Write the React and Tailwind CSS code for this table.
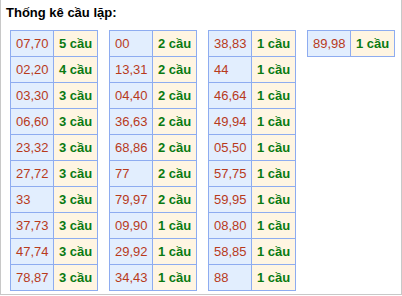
const columns = [
  [
    ["07,70", "5 cầu"],
    ["02,20", "4 cầu"],
    ["03,30", "3 cầu"],
    ["06,60", "3 cầu"],
    ["23,32", "3 cầu"],
    ["27,72", "3 cầu"],
    ["33", "3 cầu"],
    ["37,73", "3 cầu"],
    ["47,74", "3 cầu"],
    ["78,87", "3 cầu"],
  ],
  [
    ["00", "2 cầu"],
    ["13,31", "2 cầu"],
    ["04,40", "2 cầu"],
    ["36,63", "2 cầu"],
    ["68,86", "2 cầu"],
    ["77", "2 cầu"],
    ["79,97", "2 cầu"],
    ["09,90", "1 cầu"],
    ["29,92", "1 cầu"],
    ["34,43", "1 cầu"],
  ],
  [
    ["38,83", "1 cầu"],
    ["44", "1 cầu"],
    ["46,64", "1 cầu"],
    ["49,94", "1 cầu"],
    ["05,50", "1 cầu"],
    ["57,75", "1 cầu"],
    ["59,95", "1 cầu"],
    ["08,80", "1 cầu"],
    ["58,85", "1 cầu"],
    ["88", "1 cầu"],
  ],
  [["89,98", "1 cầu"]],
];

export default function App() {
  return (
    <div
      className="w-[402px] h-[295px] bg-white border-x border-b border-[#c8c8c8]"
      style={{ fontFamily: '"Liberation Sans", Arial, sans-serif' }}
    >
      {/* Title */}
      <h3 className="pl-[5px] pt-[5px] h-[30px] text-[13px] font-bold leading-[15px] text-black">
        Thống kê cầu lặp:
      </h3>

      {/* Tables */}
      <div className="flex items-start gap-[11px] pl-[9px]">
        {columns.map((rows, i) => (
          <table key={i} className="border-collapse w-[88px] table-fixed">
            <tbody>
              {rows.map(([pair, count]) => (
                <tr key={pair} className="h-[26px]">
                  <td className="w-[43px] border border-[#8eacf0] bg-[#e2eefe] pl-[5px] text-[13px] leading-[15px] text-[#b83a1c] whitespace-nowrap">
                    {pair}
                  </td>
                  <td className="border border-[#8eacf0] bg-[#fff5e2] pl-[5px] text-[13px] leading-[15px] font-bold text-[#0a7a12] whitespace-nowrap">
                    {count}
                  </td>
                </tr>
              ))}
            </tbody>
          </table>
        ))}
      </div>
    </div>
  );
}
